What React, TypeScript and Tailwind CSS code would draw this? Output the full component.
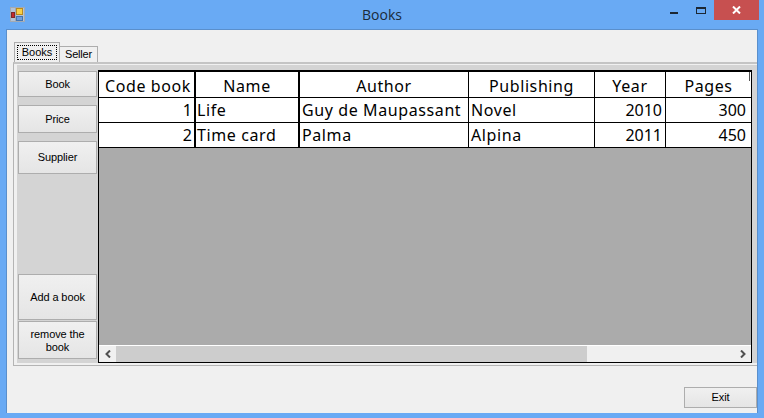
const headers = ['Code book', 'Name', 'Author', 'Publishing', 'Year', 'Pages'];

const rows = [
  { code: 1, name: 'Life', author: 'Guy de Maupassant', publishing: 'Novel', year: 2010, pages: 300 },
  { code: 2, name: 'Time card', author: 'Palma', publishing: 'Alpina', year: 2011, pages: 450 },
];

const btn =
  'border border-[#adadad] bg-linear-to-b from-[#f0f0f0] to-[#e5e5e5] text-[11px] leading-[13px] tracking-[-0.1px] text-[#000] font-["Liberation_Sans",sans-serif]';

export default function App() {
  return (
    <div className="flex h-[418px] w-[764px] flex-col overflow-hidden bg-[#69aaf4]">
      {/* title bar */}
      <div className="relative flex h-[29px] shrink-0 items-start justify-center">
        <svg className="absolute left-[10px] top-[7px]" width="15" height="15" viewBox="0 0 15 15">
          <rect x="0" y="0" width="15" height="15" fill="#b4c3d6" />
          <path d="M0.5 0 V15 M5.5 0 V15 M14.5 0 V15 M0 0.5 H15 M0 14.5 H15" stroke="#a3aab3" strokeWidth="1" fill="none" />
          <rect x="6.5" y="1.5" width="6" height="6" fill="#f8cf47" stroke="#b98a1c" strokeWidth="1" />
          <rect x="1.5" y="5.5" width="3" height="5" fill="#c62a2a" stroke="#7d2a2a" strokeWidth="1" />
          <rect x="6.5" y="9.5" width="6" height="4" fill="#6f9fdc" stroke="#4474b0" strokeWidth="1" />
        </svg>
        <span className="mt-[5px] font-['Open_Sans',sans-serif] text-[14px] leading-[20px] text-[#1a2a3a]">Books</span>
        <div className="absolute left-[670px] top-[12px] h-[2px] w-[8px] bg-[#1c2733]" />
        <div className="absolute left-[696px] top-[7px] h-[7px] w-[10px] border border-t-2 border-[#1c2733]" />
        <div className="absolute left-[714px] top-0 flex h-[20px] w-[45px] items-center justify-center bg-[#c75050]">
          <svg width="9" height="8" viewBox="0 0 9 8">
            <path d="M1 0.5 L8 7.5 M8 0.5 L1 7.5" stroke="#fff" strokeWidth="2" />
          </svg>
        </div>
      </div>

      {/* client area */}
      <div className="mb-[5px] ml-[6px] mr-[6px] flex min-h-0 flex-1 flex-col border border-b-0 border-[#5a8fcc] bg-[#f0f0f0] pl-[6px] pt-[11px]">
        {/* tabs */}
        <div className="flex h-[21px] shrink-0 items-end pl-px">
          <div className="flex h-[20px] w-[46px] items-center justify-center border border-b-0 border-[#adadad] bg-[#f0f0f0]">
            <span className="flex h-[15px] w-[40px] items-center justify-center border border-dotted border-black font-['Liberation_Sans',sans-serif] text-[11px] leading-[13px] text-black">
              Books
            </span>
          </div>
          <div className="flex h-[16px] w-[38px] items-center justify-center border border-b-0 border-l-0 border-[#adadad] font-['Liberation_Sans',sans-serif] text-[11px] tracking-[-0.2px] text-black">
            Seller
          </div>
        </div>

        {/* tab page */}
        <div className="flex h-[304px] shrink-0 flex-col border-b border-l border-t-2 border-[#b4b4b4] border-t-[#c4c4c4] pb-[2px] pl-[3px] pt-px">
          <div className="flex min-h-0 flex-1 bg-[#d4d4d4] pl-px pt-[5px]">
            {/* side buttons */}
            <div className="flex w-[79px] shrink-0 flex-col pt-px">
              <button className={`${btn} h-[26px]`}>Book</button>
              <button className={`${btn} mt-[8px] h-[28px]`}>Price</button>
              <button className={`${btn} mt-[8px] h-[33px]`}>Supplier</button>
              <button className={`${btn} mt-[100px] h-[46px]`}>Add a book</button>
              <button className={`${btn} mt-px h-[38px] pt-[2px]`}>
                remove the
                <br />
                book
              </button>
            </div>

            {/* data grid */}
            <div className="ml-px flex h-[293px] w-[654px] shrink-0 flex-col border border-t-2 border-black bg-[#ababab]">
              <table className="w-[652px] table-fixed border-separate border-spacing-0 bg-white font-['Noto_Sans',sans-serif] text-[16px] leading-[20px] tracking-[0.6px] text-black">
                <colgroup>
                  <col className="w-[97px]" />
                  <col className="w-[104px]" />
                  <col className="w-[169px]" />
                  <col className="w-[126px]" />
                  <col className="w-[71px]" />
                  <col className="w-[85px]" />
                </colgroup>
                <thead>
                  <tr className="h-[26px]">
                    {headers.map((h, i) => (
                      <th
                        key={h}
                        className={`relative border-b border-black p-0 pt-[2px] font-normal ${i < 2 ? 'border-r-2' : i < 5 ? 'border-r' : ''} ${i === 0 ? 'pr-[3px] text-right' : 'text-center'}`}
                      >
                        {h}
                        {i === 5 && <span className="absolute right-px top-0 h-[9px] w-px bg-[#555]" />}
                      </th>
                    ))}
                  </tr>
                </thead>
                <tbody>
                  {rows.map((r) => (
                    <tr key={r.code} className="h-[25px]">
                      <td className="border-b border-r-2 border-black pr-[2px] text-right tracking-normal">{r.code}</td>
                      <td className="border-b border-r-2 border-black pl-[1px]">{r.name}</td>
                      <td className="border-b border-r border-black pl-[2px]">{r.author}</td>
                      <td className="border-b border-r border-black pl-[2px]">{r.publishing}</td>
                      <td className="border-b border-r border-black pr-[3px] text-right tracking-normal">{r.year}</td>
                      <td className="border-b border-black pr-[5px] text-right tracking-normal">{r.pages}</td>
                    </tr>
                  ))}
                </tbody>
              </table>

              {/* scrollbar */}
              <div className="mt-auto flex h-[17px] shrink-0 items-stretch border-t border-white bg-[#f0f0f0]">
                <div className="flex w-[17px] items-center justify-center">
                  <svg width="6" height="8" viewBox="0 0 6 8">
                    <path d="M5 0.5 L1.5 4 L5 7.5" fill="none" stroke="#505050" strokeWidth="2" />
                  </svg>
                </div>
                <div className="w-[471px] bg-[#cdcdcd]" />
                <div className="flex-1" />
                <div className="flex w-[17px] items-center justify-center">
                  <svg width="6" height="8" viewBox="0 0 6 8">
                    <path d="M1 0.5 L4.5 4 L1 7.5" fill="none" stroke="#505050" strokeWidth="2" />
                  </svg>
                </div>
              </div>
            </div>
          </div>
        </div>

        {/* footer */}
        <div className="flex flex-1 justify-end pt-[21px]">
          <button className={`${btn} h-[21px] w-[73px]`}>Exit</button>
        </div>
      </div>
    </div>
  );
}
